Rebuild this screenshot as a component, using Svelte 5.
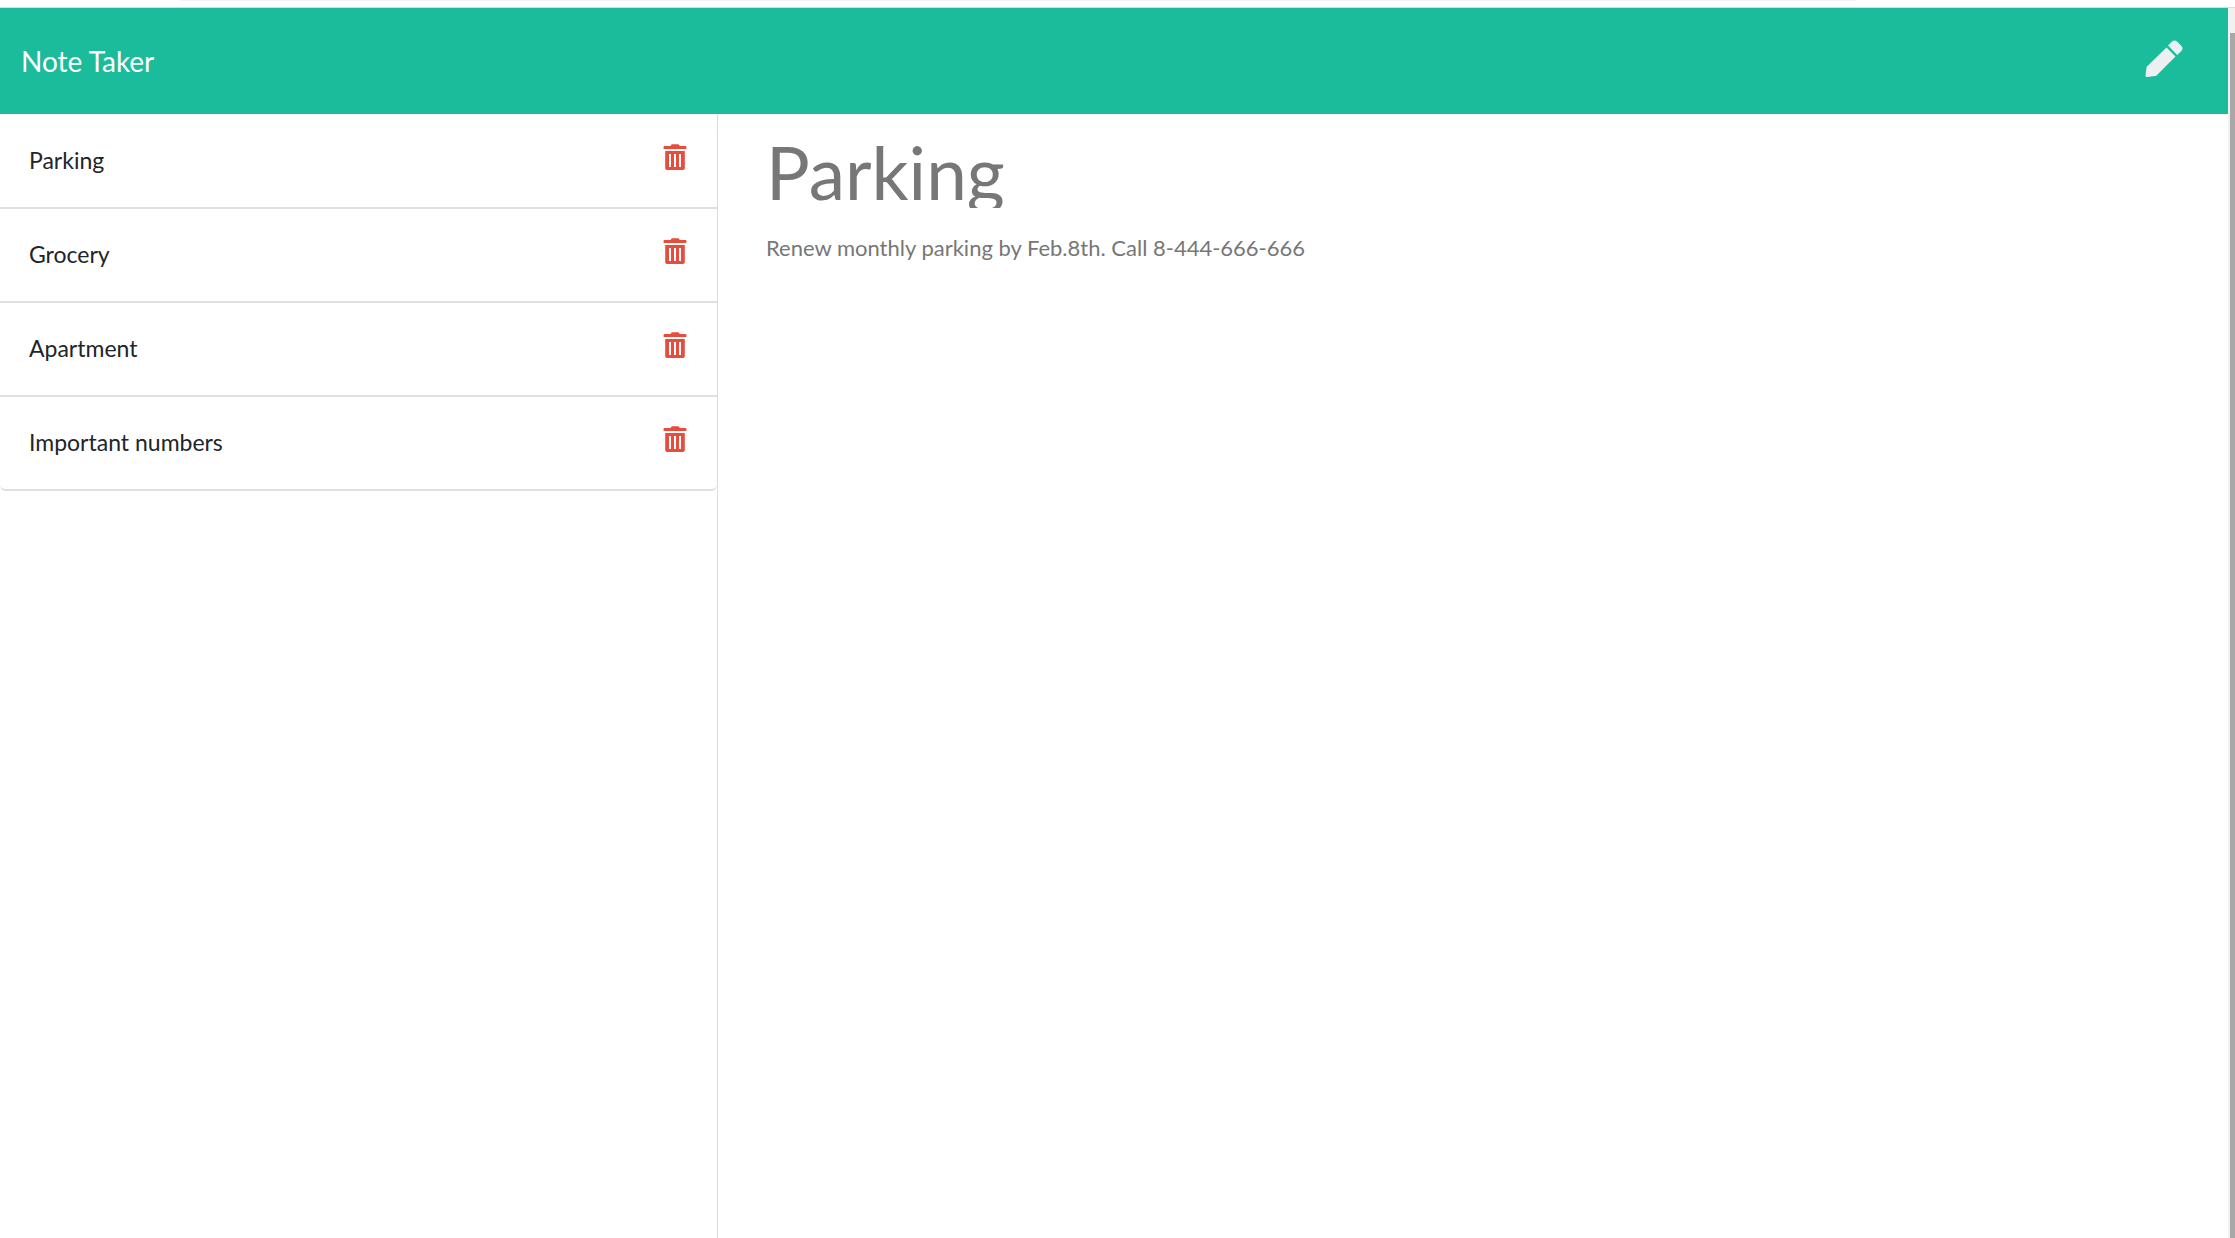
<script>
  let notes = $state([
    { id: 1, title: 'Parking', text: 'Renew monthly parking by Feb.8th. Call 8-444-666-666' },
    { id: 2, title: 'Grocery', text: '' },
    { id: 3, title: 'Apartment', text: '' },
    { id: 4, title: 'Important numbers', text: '' }
  ]);
  let active = $state({ title: 'Parking', text: 'Renew monthly parking by Feb.8th. Call 8-444-666-666' });

  function open(note) {
    active = { title: note.title, text: note.text };
  }
  function remove(id) {
    notes = notes.filter((n) => n.id !== id);
  }
  function create() {
    active = { title: '', text: '' };
  }
</script>

<div class="window">
  <div class="strip"><span></span></div>
  <div class="view">
    <div class="app">
      <header>
        <a class="brand" href="/">Note Taker</a>
        <button class="new" aria-label="New note" onclick={create}>
          <svg viewBox="0 0 38 38" width="38" height="38" aria-hidden="true">
            <path d="M21.5 7.5 30.5 16.5 11.8 35.2Q11.2 35.8 10.3 36L2 37Q.4 37.1.5 35.5L1.5 27.5Q1.6 26.8 2.2 26.2Z" />
            <path d="M23 5.6 26.8 1.8Q29.3-.8 32 1.6L36.2 5.8Q38.8 8.5 36.2 11.2L32.2 14.9Z" />
          </svg>
        </button>
      </header>
      <main>
        <nav aria-label="Notes">
          <ul>
            {#each notes as note (note.id)}
              <li>
                <button class="name" onclick={() => open(note)}>{note.title}</button>
                <button class="trash" aria-label="Delete {note.title}" onclick={() => remove(note.id)}>
                  <svg viewBox="0 0 24 27" width="24" height="27" aria-hidden="true">
                    <path d="M8 1.2Q8.4.2 9.4.2H15Q16 .2 16.4 1.2L16.8 2H22.6Q23.4 2 23.4 2.8V4.9H.6V2.8Q.6 2 1.4 2H7.6Z" />
                    <path fill-rule="evenodd" d="M2.2 7H21.8V24.2Q21.8 26 20 26H4Q2.2 26 2.2 24.2ZM6 10V23H8V10ZM11 10V23H13V10ZM16 10V23H18V10Z" />
                  </svg>
                </button>
              </li>
            {/each}
          </ul>
        </nav>
        <section>
          <input type="text" aria-label="Note title" placeholder="Note Title" bind:value={active.title} />
          <textarea aria-label="Note text" placeholder="Note Text" spellcheck="false" bind:value={active.text}></textarea>
        </section>
      </main>
    </div>
    <div class="scrollbar"><div class="thumb"></div></div>
  </div>
</div>

<style>
  :global(body) {
    background: #fff;
  }
  .window {
    display: flex;
    flex-direction: column;
    height: 100vh;
    overflow: hidden;
    font-family: Lato, 'Liberation Sans', sans-serif;
    font-size: 23px;
    line-height: 36px;
    color: #212529;
  }
  button,
  input,
  textarea {
    margin: 0;
    padding: 0;
    border: 0;
    background: none;
    font: inherit;
    color: inherit;
  }
  button {
    cursor: pointer;
  }
  svg {
    display: block;
    fill: currentColor;
  }
  .strip {
    box-sizing: border-box;
    flex: none;
    height: 8px;
    border-bottom: 1px solid #d9dcdc;
  }
  .strip span {
    display: block;
    height: 1px;
    margin: 0 17% 0 8%;
    background: #f1f3f4;
  }
  .view {
    display: flex;
    flex: 1;
    min-height: 0;
  }
  .app {
    display: flex;
    flex-direction: column;
    flex: 1;
    min-width: 0;
  }
  header {
    display: flex;
    align-items: center;
    justify-content: space-between;
    box-sizing: border-box;
    height: 106px;
    padding: 0 45px 0 21px;
    background: #1abc9c;
  }
  .brand {
    font-size: 28px;
    color: #fff;
    text-decoration: none;
  }
  .new {
    padding-bottom: 4px;
    color: #ecf0f1;
  }
  main {
    display: flex;
    flex: 1;
    min-height: 0;
  }
  nav {
    box-sizing: border-box;
    width: 718px;
    flex: none;
    border-right: 1px solid #dcdcdc;
  }
  ul {
    margin: 0;
    padding: 1px 0 0;
    list-style: none;
  }
  li {
    display: flex;
    align-items: center;
    justify-content: space-between;
    box-sizing: border-box;
    height: 94px;
    padding: 0 30px 2px 29px;
    border-bottom: 2px solid #dfdfdf;
  }
  li:last-child {
    border-radius: 0 0 6px 6px;
  }
  .name {
    flex: 1;
    text-align: left;
  }
  .trash {
    padding-bottom: 5px;
    color: #e74c3c;
  }
  section {
    display: flex;
    flex-direction: column;
    flex: 1;
    gap: 22px;
    min-width: 0;
    padding: 22px 48px 24px;
  }
  input {
    width: 100%;
    height: 72px;
    font-size: 73px;
    line-height: 72px;
    color: #777;
  }
  textarea {
    flex: 1;
    resize: none;
    font-size: 22px;
    color: #777;
  }
  input:focus,
  textarea:focus {
    outline: none;
  }
  .scrollbar {
    flex: none;
    width: 7px;
    box-sizing: border-box;
    padding: 25px 0 0 2px;
    background: #f1f1f1;
  }
  .thumb {
    height: 100%;
    background: #a8a8a8;
  }
</style>
